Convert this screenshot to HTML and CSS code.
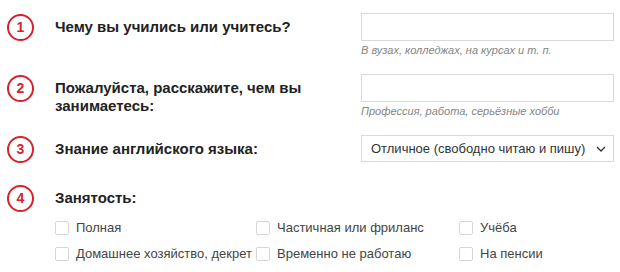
FILE: index.html
```html
<!DOCTYPE html>
<html lang="ru">
<head>
<meta charset="utf-8">
<link rel="stylesheet" href="styles.css">
</head>
<body>
<div class="form">
  <div class="row row-1">
    <div class="num">1</div>
    <div class="label">Чему вы учились или учитесь?</div>
    <div class="field">
      <div class="input"></div>
      <div class="hint">В вузах, колледжах, на курсах и т. п.</div>
    </div>
  </div>
  <div class="row row-2">
    <div class="num">2</div>
    <div class="label label-multi">Пожалуйста, расскажите, чем вы<br>занимаетесь:</div>
    <div class="field">
      <div class="input"></div>
      <div class="hint">Профессия, работа, серьёзные хобби</div>
    </div>
  </div>
  <div class="row row-3">
    <div class="num">3</div>
    <div class="label">Знание английского языка:</div>
    <div class="field">
      <div class="select">
        <span>Отличное (свободно читаю и пишу)</span>
        <svg class="chev" width="10" height="6" viewBox="0 0 10 6"><path d="M1 1 L5 5 L9 1" fill="none" stroke="#333" stroke-width="1.3"/></svg>
      </div>
    </div>
  </div>
  <div class="row row-4">
    <div class="num">4</div>
    <div class="label">Занятость:</div>
  </div>
  <div class="checks">
    <label class="check"><span class="box"></span>Полная</label>
    <label class="check"><span class="box"></span>Частичная или фриланс</label>
    <label class="check"><span class="box"></span>Учёба</label>
    <label class="check"><span class="box"></span>Домашнее хозяйство, декрет</label>
    <label class="check"><span class="box"></span>Временно не работаю</label>
    <label class="check"><span class="box"></span>На пенсии</label>
  </div>
</div>
</body>
</html>
```
FILE: styles.css
```css
html, body {
  margin: 0;
  padding: 0;
  background: #fff;
}
.form {
  padding: 13px 0 0 7px;
  width: 607px;
}
.row {
  display: flex;
  align-items: flex-start;
}
.num {
  box-sizing: border-box;
  width: 27px;
  height: 27px;
  border: 2px solid #d8222b;
  border-radius: 50%;
  color: #d8222b;
  font: bold 14px/23px "Liberation Sans", Arial, sans-serif;
  text-align: center;
  margin-top: 1px;
  flex: none;
}
.label {
  width: 306px;
  margin-left: 21px;
  font: bold 15px/28px "Liberation Sans", Arial, sans-serif;
  color: #222;
  flex: none;
}
.label-multi {
  line-height: 18px;
  padding-top: 5px;
}
.field {
  width: 253px;
  flex: none;
}
.input, .select {
  box-sizing: border-box;
  height: 28px;
  border: 1px solid #d9d9d9;
  background: #fff;
}
.hint {
  margin-top: 1px;
  font: italic 11px/16px "Liberation Sans", Arial, sans-serif;
  color: #858585;
}
.row-2 {
  margin-top: 16px;
}
.row-3 {
  margin-top: 16px;
}
.select {
  height: 27px;
  display: flex;
  align-items: center;
  justify-content: space-between;
  padding: 0 7px 0 9px;
  font: 13px "Liberation Sans", Arial, sans-serif;
  color: #333;
  white-space: nowrap;
}
.row-4 {
  margin-top: 21px;
}
.checks {
  display: grid;
  grid-template-columns: 201px 203px auto;
  row-gap: 12px;
  margin: 9px 0 0 48px;
}
.check {
  display: flex;
  align-items: center;
  font: 13px/14px "Liberation Sans", Arial, sans-serif;
  color: #444;
  white-space: nowrap;
}
.box {
  box-sizing: border-box;
  width: 14px;
  height: 14px;
  border: 1px solid #d6d6d6;
  border-radius: 2px;
  margin-right: 7px;
  flex: none;
}
```
